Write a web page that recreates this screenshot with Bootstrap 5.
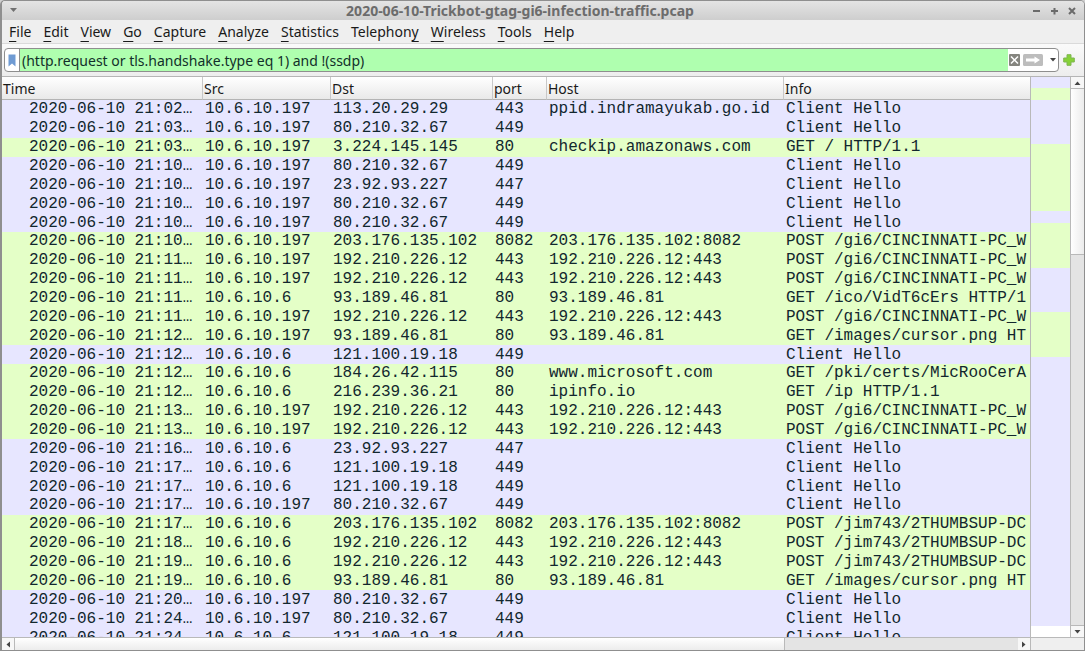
<!DOCTYPE html>
<html lang="en">
<head>
<meta charset="utf-8">
<meta name="viewport" content="width=device-width, initial-scale=1">
<title>2020-06-10-Trickbot-gtag-gi6-infection-traffic.pcap</title>
<link href="https://cdn.jsdelivr.net/npm/bootstrap@5.3.0/dist/css/bootstrap.min.css" rel="stylesheet">
<style>
  :root { --tls: #e7e6ff; --http: #e4ffc7; --line: #b9b9b9; }
  body { font-family: "Noto Sans", sans-serif; font-size: 14px; line-height: 20px; color: #1a1a1a; background: #cfcfcf; }
  button { border: 0; padding: 0; background: none; color: inherit; }
  .app-window { background: #efefef; border: 1px solid #8f8f8f; border-left-width: 2px; border-radius: 5px 5px 0 0; }
  .title-bar { height: 19px; background: linear-gradient(#e4e4e4, #cecece); color: #6c6c6c; }
  .title-text { font-size: 14px; line-height: 19px; font-weight: 700; }
  .win-controls { gap: 10px; padding-right: 8px; }
  .win-side { width: 62px; }
  .menu-bar { gap: 12px; padding: 2px 7px 1px; height: 24px; border-bottom: 1px solid #dadada; }
  .menu-bar u { text-underline-offset: 4px; text-decoration-thickness: 1px; }
  .filter-bar { padding: 4px 9px 4px 2px; gap: 4px; background: linear-gradient(#fafafa, #ededed); border-bottom: 1px solid #b5b5b5; }
  .filter-box { border: 1px solid #8e8e8e; border-radius: 4px; background: #fff; height: 24px; overflow: hidden; }
  .filter-mark { width: 15px; border-right: 1px solid #8e8e8e; }
  .filter-input { border: 0; outline: 0; background: #afffaf; color: #12302a; padding: 1px 2px 0; min-width: 0; }
  .filter-tools { padding: 0 2px 0 1px; gap: 3px; }
  .packet-pane { overflow: hidden; border-right: 1px solid var(--line); background: var(--tls); }
  .packets { table-layout: fixed; width: 100%; height: 570px; border-collapse: separate; border-spacing: 0; }
  .packets th { height: 23px; padding: 2px 1px 0; font-weight: 400; line-height: 20px; background: linear-gradient(#fff, #e9e9e9); border-right: 1px solid #c8c8c8; border-bottom: 1px solid #b4b4b4; }
  .packets th:last-child { border-right: 0; }
  .packets td { padding: 0 2px; font-family: "Liberation Mono", monospace; font-size: 16px; line-height: 18px; color: #12272e; white-space: nowrap; overflow: hidden; }
  .packets td:first-child { padding-left: 27px; padding-right: 0; }
  .packets .http td { background: var(--http); }
  .packets .tls td { background: var(--tls); }
  .c-time { width: 201px; } .c-src { width: 128px; } .c-dst { width: 162px; } .c-port { width: 54px; } .c-host { width: 237px; }
  .overview { width: 40px; border-right: 1px solid var(--line); }
  .overview div { flex-basis: 0; }
  .bg-tls { background: var(--tls); } .bg-http { background: var(--http); }
  .v-scroll { width: 13px; background: #e4e4e4; }
  .v-scroll button { height: 12px; background: #f7f7f7; border-bottom: 1px solid var(--line); }
  .v-scroll .down { border-bottom: 0; border-top: 1px solid var(--line); }
  .v-thumb { background: linear-gradient(90deg, #fff, #ececec); border-bottom: 1px solid var(--line); }
  .h-row { height: 13px; border-top: 1px solid var(--line); }
  .h-scroll { background: #e4e4e4; border-right: 1px solid var(--line); }
  .h-scroll button { width: 12px; background: #f7f7f7; }
  .h-thumb { width: 75%; background: linear-gradient(#fff, #ececec); border: solid var(--line); border-width: 0 1px; }
  .h-corner { width: 53px; }
</style>
</head>
<body>
<div class="app-window d-flex flex-column vh-100 overflow-hidden">
  <header class="title-bar d-flex align-items-center flex-shrink-0">
    <button class="win-side d-flex align-items-center ps-2" aria-label="Window menu"><svg width="8" height="5"><path d="M0 0h7L3.500 4z" fill="#707070"/></svg></button>
    <div class="title-text flex-grow-1 text-center text-truncate pe-5"><span class="pe-2">2020-06-10-Trickbot-gtag-gi6-infection-traffic.pcap</span></div>
    <div class="win-controls d-flex align-items-center">
      <button class="d-flex" aria-label="Minimize"><svg width="8" height="8"><path d="M1 4h7" stroke="#6b6b6b" stroke-width="2"/></svg></button>
      <button class="d-flex" aria-label="Maximize"><svg width="8" height="8"><path d="M1 4h7M4.500 1v6.500" stroke="#6b6b6b" stroke-width="2"/></svg></button>
      <button class="d-flex" aria-label="Close"><svg width="8" height="8"><path d="M1 1l6 6M7 1L1 7" stroke="#6b6b6b" stroke-width="2"/></svg></button>
    </div>
  </header>

  <nav class="menu-bar d-flex flex-shrink-0" aria-label="Main menu">
    <button><u>F</u>ile</button><button><u>E</u>dit</button><button><u>V</u>iew</button><button><u>G</u>o</button><button><u>C</u>apture</button><button><u>A</u>nalyze</button><button><u>S</u>tatistics</button><button>Telephon<u>y</u></button><button><u>W</u>ireless</button><button><u>T</u>ools</button><button><u>H</u>elp</button>
  </nav>

  <form class="filter-bar d-flex align-items-center flex-shrink-0">
    <div class="filter-box d-flex flex-grow-1">
      <button type="button" class="filter-mark d-flex align-items-center justify-content-center" aria-label="Bookmarks"><svg width="8" height="13"><path d="M.5 .5h7v12L4 9.500 .5 12.500z" fill="#6f9bd3"/></svg></button>
      <input class="filter-input flex-grow-1" type="text" aria-label="Display filter" value="(http.request or tls.handshake.type eq 1) and !(ssdp)">
      <div class="filter-tools d-flex align-items-center">
        <button type="button" class="d-flex" aria-label="Clear"><svg width="11" height="12"><rect width="11" height="12" rx="1" fill="#85857f"/><path d="M2 2.500l7 7M9 2.500l-7 7" stroke="#fff" stroke-width="1.500"/></svg></button>
        <button type="submit" class="d-flex" aria-label="Apply"><svg width="20" height="12"><rect width="20" height="12" rx="1.500" fill="#bdbdbd"/><path d="M3 4.500h8.500V2.500L17 6l-5.500 3.500v-2H3z" fill="#fff"/></svg></button>
        <button type="button" class="d-flex ps-1" aria-label="Filter history"><svg width="6" height="4"><path d="M0 0h6L3 3.500z" fill="#444"/></svg></button>
      </div>
    </div>
    <button type="button" class="d-flex" aria-label="Add filter button"><svg width="12" height="12"><path d="M4 .7h4V4h3.300v4H8v3.300H4V8H.7V4H4z" fill="#85d137" stroke="#7fb552"/></svg></button>
  </form>

  <main class="d-flex flex-grow-1 overflow-hidden">
    <div class="packet-pane flex-grow-1">
      <table class="packets">
        <colgroup><col class="c-time"><col class="c-src"><col class="c-dst"><col class="c-port"><col class="c-host"><col></colgroup>
        <thead><tr><th>Time</th><th>Src</th><th>Dst</th><th>port</th><th>Host</th><th>Info</th></tr></thead>
        <tbody>
          <tr class="tls"><td>2020-06-10 21:02…</td><td>10.6.10.197</td><td>113.20.29.29</td><td>443</td><td>ppid.indramayukab.go.id</td><td>Client Hello</td></tr>
          <tr class="tls"><td>2020-06-10 21:03…</td><td>10.6.10.197</td><td>80.210.32.67</td><td>449</td><td></td><td>Client Hello</td></tr>
          <tr class="http"><td>2020-06-10 21:03…</td><td>10.6.10.197</td><td>3.224.145.145</td><td>80</td><td>checkip.amazonaws.com</td><td>GET / HTTP/1.1</td></tr>
          <tr class="tls"><td>2020-06-10 21:10…</td><td>10.6.10.197</td><td>80.210.32.67</td><td>449</td><td></td><td>Client Hello</td></tr>
          <tr class="tls"><td>2020-06-10 21:10…</td><td>10.6.10.197</td><td>23.92.93.227</td><td>447</td><td></td><td>Client Hello</td></tr>
          <tr class="tls"><td>2020-06-10 21:10…</td><td>10.6.10.197</td><td>80.210.32.67</td><td>449</td><td></td><td>Client Hello</td></tr>
          <tr class="tls"><td>2020-06-10 21:10…</td><td>10.6.10.197</td><td>80.210.32.67</td><td>449</td><td></td><td>Client Hello</td></tr>
          <tr class="http"><td>2020-06-10 21:10…</td><td>10.6.10.197</td><td>203.176.135.102</td><td>8082</td><td>203.176.135.102:8082</td><td>POST /gi6/CINCINNATI-PC_W</td></tr>
          <tr class="http"><td>2020-06-10 21:11…</td><td>10.6.10.197</td><td>192.210.226.12</td><td>443</td><td>192.210.226.12:443</td><td>POST /gi6/CINCINNATI-PC_W</td></tr>
          <tr class="http"><td>2020-06-10 21:11…</td><td>10.6.10.197</td><td>192.210.226.12</td><td>443</td><td>192.210.226.12:443</td><td>POST /gi6/CINCINNATI-PC_W</td></tr>
          <tr class="http"><td>2020-06-10 21:11…</td><td>10.6.10.6</td><td>93.189.46.81</td><td>80</td><td>93.189.46.81</td><td>GET /ico/VidT6cErs HTTP/1</td></tr>
          <tr class="http"><td>2020-06-10 21:11…</td><td>10.6.10.197</td><td>192.210.226.12</td><td>443</td><td>192.210.226.12:443</td><td>POST /gi6/CINCINNATI-PC_W</td></tr>
          <tr class="http"><td>2020-06-10 21:12…</td><td>10.6.10.197</td><td>93.189.46.81</td><td>80</td><td>93.189.46.81</td><td>GET /images/cursor.png HT</td></tr>
          <tr class="tls"><td>2020-06-10 21:12…</td><td>10.6.10.6</td><td>121.100.19.18</td><td>449</td><td></td><td>Client Hello</td></tr>
          <tr class="http"><td>2020-06-10 21:12…</td><td>10.6.10.6</td><td>184.26.42.115</td><td>80</td><td>www.microsoft.com</td><td>GET /pki/certs/MicRooCerA</td></tr>
          <tr class="http"><td>2020-06-10 21:12…</td><td>10.6.10.6</td><td>216.239.36.21</td><td>80</td><td>ipinfo.io</td><td>GET /ip HTTP/1.1</td></tr>
          <tr class="http"><td>2020-06-10 21:13…</td><td>10.6.10.197</td><td>192.210.226.12</td><td>443</td><td>192.210.226.12:443</td><td>POST /gi6/CINCINNATI-PC_W</td></tr>
          <tr class="http"><td>2020-06-10 21:13…</td><td>10.6.10.197</td><td>192.210.226.12</td><td>443</td><td>192.210.226.12:443</td><td>POST /gi6/CINCINNATI-PC_W</td></tr>
          <tr class="tls"><td>2020-06-10 21:16…</td><td>10.6.10.6</td><td>23.92.93.227</td><td>447</td><td></td><td>Client Hello</td></tr>
          <tr class="tls"><td>2020-06-10 21:17…</td><td>10.6.10.6</td><td>121.100.19.18</td><td>449</td><td></td><td>Client Hello</td></tr>
          <tr class="tls"><td>2020-06-10 21:17…</td><td>10.6.10.6</td><td>121.100.19.18</td><td>449</td><td></td><td>Client Hello</td></tr>
          <tr class="tls"><td>2020-06-10 21:17…</td><td>10.6.10.197</td><td>80.210.32.67</td><td>449</td><td></td><td>Client Hello</td></tr>
          <tr class="http"><td>2020-06-10 21:17…</td><td>10.6.10.6</td><td>203.176.135.102</td><td>8082</td><td>203.176.135.102:8082</td><td>POST /jim743/2THUMBSUP-DC</td></tr>
          <tr class="http"><td>2020-06-10 21:18…</td><td>10.6.10.6</td><td>192.210.226.12</td><td>443</td><td>192.210.226.12:443</td><td>POST /jim743/2THUMBSUP-DC</td></tr>
          <tr class="http"><td>2020-06-10 21:19…</td><td>10.6.10.6</td><td>192.210.226.12</td><td>443</td><td>192.210.226.12:443</td><td>POST /jim743/2THUMBSUP-DC</td></tr>
          <tr class="http"><td>2020-06-10 21:19…</td><td>10.6.10.6</td><td>93.189.46.81</td><td>80</td><td>93.189.46.81</td><td>GET /images/cursor.png HT</td></tr>
          <tr class="tls"><td>2020-06-10 21:20…</td><td>10.6.10.197</td><td>80.210.32.67</td><td>449</td><td></td><td>Client Hello</td></tr>
          <tr class="tls"><td>2020-06-10 21:24…</td><td>10.6.10.197</td><td>80.210.32.67</td><td>449</td><td></td><td>Client Hello</td></tr>
          <tr class="tls"><td>2020-06-10 21:24…</td><td>10.6.10.6</td><td>121.100.19.18</td><td>449</td><td></td><td>Client Hello</td></tr>
        </tbody>
      </table>
    </div>
    <div class="overview d-flex flex-column flex-shrink-0 bg-white" aria-hidden="true">
      <div class="bg-tls" style="flex-grow:11"></div>
      <div class="bg-http" style="flex-grow:12"></div>
      <div class="bg-tls" style="flex-grow:44"></div>
      <div class="bg-http" style="flex-grow:67"></div>
      <div class="bg-tls" style="flex-grow:12"></div>
      <div class="bg-http" style="flex-grow:45"></div>
      <div class="bg-tls" style="flex-grow:44"></div>
      <div class="bg-http" style="flex-grow:45"></div>
      <div class="bg-tls" style="flex-grow:269"></div>
      <div style="flex-grow:11"></div>
    </div>
    <div class="v-scroll d-flex flex-column flex-shrink-0">
      <button class="d-flex align-items-center justify-content-center flex-shrink-0" aria-label="Scroll up"><svg width="7" height="4"><path d="M.5 4h6L3.500 .5z" fill="#444"/></svg></button>
      <div class="flex-grow-1"><div class="v-thumb" style="height:31%"></div></div>
      <button class="down d-flex align-items-center justify-content-center flex-shrink-0" aria-label="Scroll down"><svg width="7" height="4"><path d="M.5 0h6L3.500 3.500z" fill="#444"/></svg></button>
    </div>
  </main>

  <footer class="h-row d-flex flex-shrink-0">
    <div class="h-scroll d-flex flex-grow-1">
      <button class="d-flex align-items-center justify-content-center flex-shrink-0" aria-label="Scroll left"><svg width="4" height="7"><path d="M4 .5v6L.5 3.500z" fill="#444"/></svg></button>
      <div class="h-thumb"></div>
      <button class="d-flex align-items-center justify-content-center flex-shrink-0 ms-auto" aria-label="Scroll right"><svg width="4" height="7"><path d="M0 .5v6L3.500 3.500z" fill="#444"/></svg></button>
    </div>
    <div class="h-corner flex-shrink-0"></div>
  </footer>
</div>
<script src="https://cdn.jsdelivr.net/npm/bootstrap@5.3.0/dist/js/bootstrap.bundle.min.js"></script>
</body>
</html>
